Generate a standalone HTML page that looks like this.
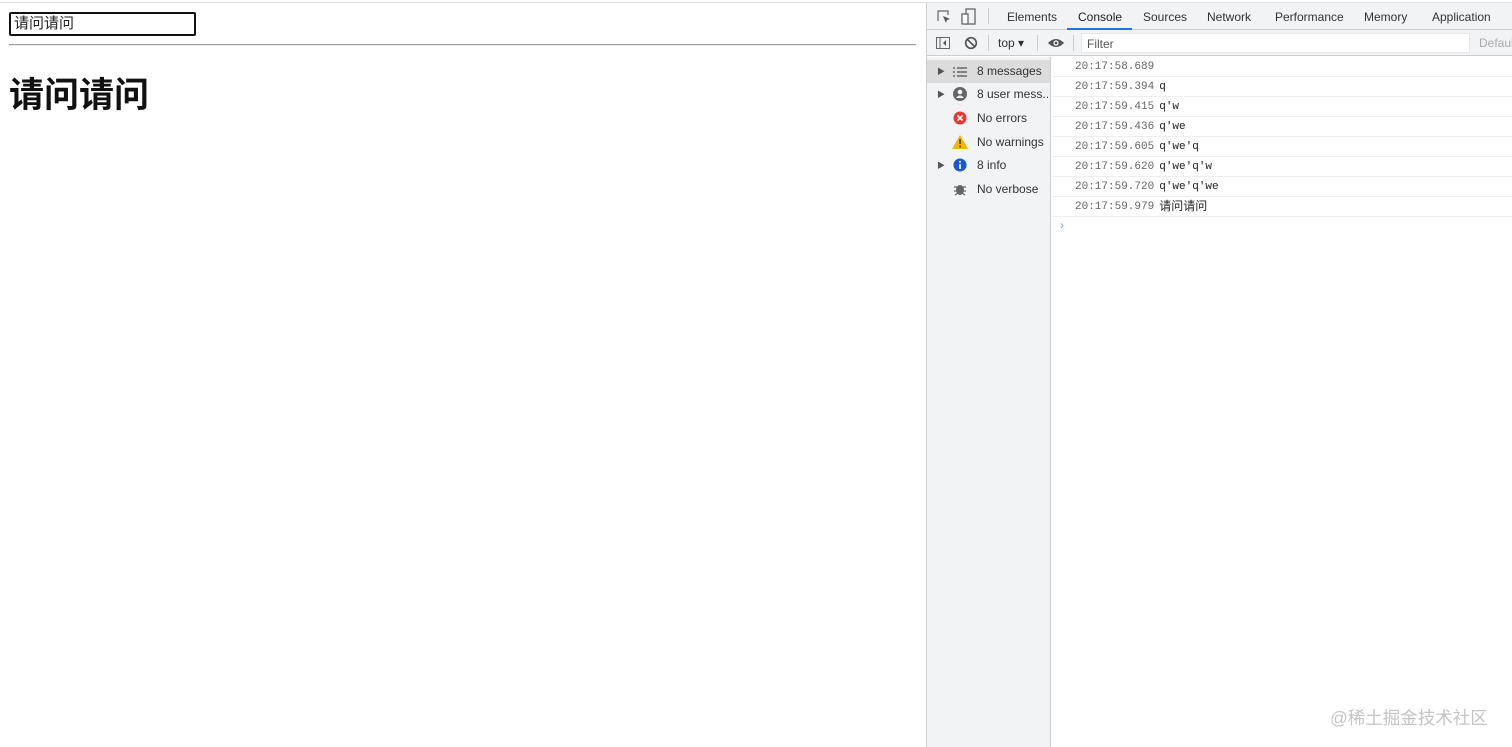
<!DOCTYPE html>
<html><head><meta charset="utf-8"><style>
*{margin:0;padding:0;box-sizing:border-box}
body{width:1512px;height:747px;overflow:hidden;background:#fff;font-family:"Liberation Sans","Noto Sans CJK SC",sans-serif;position:relative}
.abs{position:absolute}
.topline{left:0;top:0;width:1512px;height:3px;border-bottom:1px solid #e0e0e0;background:#fff}
.inp{left:9px;top:12px;width:187px;height:24px;border:2px solid #111;border-radius:2px;font-size:15px;line-height:20px;padding-left:3px;color:#222}
.hr{left:9px;top:44px;width:907px;height:2px;border-top:1px solid #9a9a9a;border-bottom:1px solid #eee}
h1{position:absolute;left:9px;top:74px;font-size:35px;font-weight:bold;line-height:44px;color:#111;font-family:"Liberation Sans","Noto Sans CJK SC",sans-serif}
.dt{left:926px;top:3px;width:586px;height:744px;border-left:1px solid #cbcdd1;background:#fff;font-size:12px;color:#333}
.tabs{left:0;top:0;width:586px;height:27px;background:#f1f3f4;border-bottom:1px solid #cbcdd1}
.tab{position:absolute;top:7px;font-size:12px;color:#333}
.filt{left:0;top:27px;width:586px;height:26px;background:#f1f3f4;border-bottom:1px solid #cbcdd1}
.side{left:0;top:54px;width:124px;height:690px;background:#f1f3f4;border-right:1px solid #cbcdd1}
.si{position:absolute;left:0;width:123px;height:23px;font-size:12px;color:#333;line-height:23px;white-space:nowrap;overflow:hidden}
.row{position:absolute;left:125px;width:461px;height:20px;border-bottom:1px solid #eceff1;font-family:"Liberation Mono","Noto Sans CJK SC",monospace;font-size:11px;line-height:20px;color:#222;white-space:nowrap}
.row span{color:#666;margin-left:23px;margin-right:5px}
.sep{position:absolute;width:1px;height:16px;background:#ccc}
</style></head><body>
<div class="abs topline"></div>
<div class="abs inp">请问请问</div>
<div class="abs hr"></div>
<h1>请问请问</h1>
<div class="abs dt">
 <div class="abs tabs">
  <svg class="abs" style="left:9px;top:6px" width="16" height="16" viewBox="0 0 16 16"><path d="M2 12V2h10v4" fill="none" stroke="#666" stroke-width="1.2"/><path d="M7 7l7 3-3 1-1 3z" fill="#555"/></svg>
  <svg class="abs" style="left:34px;top:5px" width="16" height="18" viewBox="0 0 16 18"><rect x="5" y="1" width="9" height="15" fill="none" stroke="#666" stroke-width="1.3"/><rect x="1" y="6" width="6" height="10" fill="#fff" stroke="#666" stroke-width="1.3"/></svg>
  <div class="sep" style="left:61px;top:5px"></div>
  <div class="tab" style="left:80px">Elements</div>
  <div class="tab" style="left:151px;color:#222">Console</div>
  <div class="abs" style="left:140px;top:25px;width:65px;height:2px;background:#1a73e8"></div>
  <div class="tab" style="left:216px">Sources</div>
  <div class="tab" style="left:280px">Network</div>
  <div class="tab" style="left:348px">Performance</div>
  <div class="tab" style="left:437px">Memory</div>
  <div class="tab" style="left:505px">Application</div>
 </div>
 <div class="abs filt">
  <svg class="abs" style="left:8px;top:5px" width="16" height="16" viewBox="0 0 16 16"><rect x="1.5" y="2.5" width="13" height="11" fill="none" stroke="#666"/><path d="M5 3v10" stroke="#666"/><path d="M11 5v6L8 8z" fill="#555"/></svg>
  <svg class="abs" style="left:37px;top:6px" width="14" height="14" viewBox="0 0 14 14"><circle cx="7" cy="7" r="5.3" fill="none" stroke="#555" stroke-width="1.7"/><path d="M3.3 3.3l7.4 7.4" stroke="#555" stroke-width="1.7"/></svg>
  <div class="sep" style="left:61px;top:5px"></div>
  <div class="abs" style="left:71px;top:6px;font-size:12px">top ▾</div>
  <div class="sep" style="left:110px;top:5px"></div>
  <svg class="abs" style="left:120px;top:7px" width="18" height="12" viewBox="0 0 18 12"><path d="M1 6Q9-2 17 6Q9 14 1 6z" fill="#555"/><circle cx="9" cy="6" r="2.6" fill="#fff"/><circle cx="9" cy="6" r="1.4" fill="#555"/></svg>
  <div class="sep" style="left:146px;top:5px"></div>
  <div class="abs" style="left:154px;top:3px;width:389px;height:20px;background:#fff;border:1px solid #e6e6e6;font-size:12px;color:#555;padding:3px 5px">Filter</div>
  <div class="abs" style="left:552px;top:6px;color:#aaa;font-size:12px">Defaul</div>
 </div>
 <div class="abs side">
  <div class="si" style="top:3px;background:#dcdcdc"><span class="abs" style="left:10px;font-size:8px;color:#555">▶</span><svg class="abs" style="left:26px;top:7px" width="14" height="10"><path d="M0 1h2M4 1h10M0 5h2M4 5h10M0 9h2M4 9h10" stroke="#666" stroke-width="1.5"/></svg><span class="abs" style="left:50px">8 messages</span></div>
  <div class="si" style="top:26px"><span class="abs" style="left:10px;font-size:8px;color:#555">▶</span><svg class="abs" style="left:26px;top:4px" width="14" height="14"><circle cx="7" cy="7" r="7" fill="#666"/><circle cx="7" cy="5" r="2.3" fill="#f1f3f4"/><path d="M3 11q4-5 8 0" fill="#f1f3f4"/></svg><span class="abs" style="left:50px">8 user mess...</span></div>
  <div class="si" style="top:50px"><svg class="abs" style="left:26px;top:4px" width="14" height="14"><circle cx="7" cy="7" r="6.5" fill="#e53935"/><path d="M4.5 4.5l5 5M9.5 4.5l-5 5" stroke="#fff" stroke-width="1.6"/></svg><span class="abs" style="left:50px">No errors</span></div>
  <div class="si" style="top:74px"><svg class="abs" style="left:25px;top:4px" width="16" height="14"><path d="M8 0L16 14H0z" fill="#f4b400"/><path d="M8 4v5M8 10.5v2" stroke="#333" stroke-width="1.5"/></svg><span class="abs" style="left:50px">No warnings</span></div>
  <div class="si" style="top:97px"><span class="abs" style="left:10px;font-size:8px;color:#555">▶</span><svg class="abs" style="left:26px;top:4px" width="14" height="14"><circle cx="7" cy="7" r="6.5" fill="#1a57d6"/><path d="M7 6v5" stroke="#fff" stroke-width="1.8"/><circle cx="7" cy="3.8" r="1" fill="#fff"/></svg><span class="abs" style="left:50px">8 info</span></div>
  <div class="si" style="top:121px"><svg class="abs" style="left:26px;top:4px" width="14" height="14"><ellipse cx="7" cy="8" rx="4" ry="5" fill="#666"/><path d="M1 5h12M1 9h12M2 13l3-2M12 13l-3-2" stroke="#666" stroke-width="1.3"/></svg><span class="abs" style="left:50px">No verbose</span></div>
 </div>
 <div class="row" style="top:54px"><span>20:17:58.689</span></div>
 <div class="row" style="top:74px"><span>20:17:59.394</span>q</div>
 <div class="row" style="top:94px"><span>20:17:59.415</span>q'w</div>
 <div class="row" style="top:114px"><span>20:17:59.436</span>q'we</div>
 <div class="row" style="top:134px"><span>20:17:59.605</span>q'we'q</div>
 <div class="row" style="top:154px"><span>20:17:59.620</span>q'we'q'w</div>
 <div class="row" style="top:174px"><span>20:17:59.720</span>q'we'q'we</div>
 <div class="row" style="top:194px;line-height:20px"><span style="vertical-align:top">20:17:59.979</span><b style="font-weight:normal;font-family:'Noto Sans CJK SC',sans-serif;font-size:12px;line-height:20px;vertical-align:top;position:relative;top:-1px">请问请问</b></div>
 <div class="abs" style="left:133px;top:215px;color:#7a9fe0;font-size:12px">›</div>
 <div class="abs" style="left:403px;top:702px;color:#c4c4c4;font-size:17.5px;font-family:'Liberation Sans','Noto Sans CJK SC',sans-serif">@稀土掘金技术社区</div>
</div>
</body></html>
